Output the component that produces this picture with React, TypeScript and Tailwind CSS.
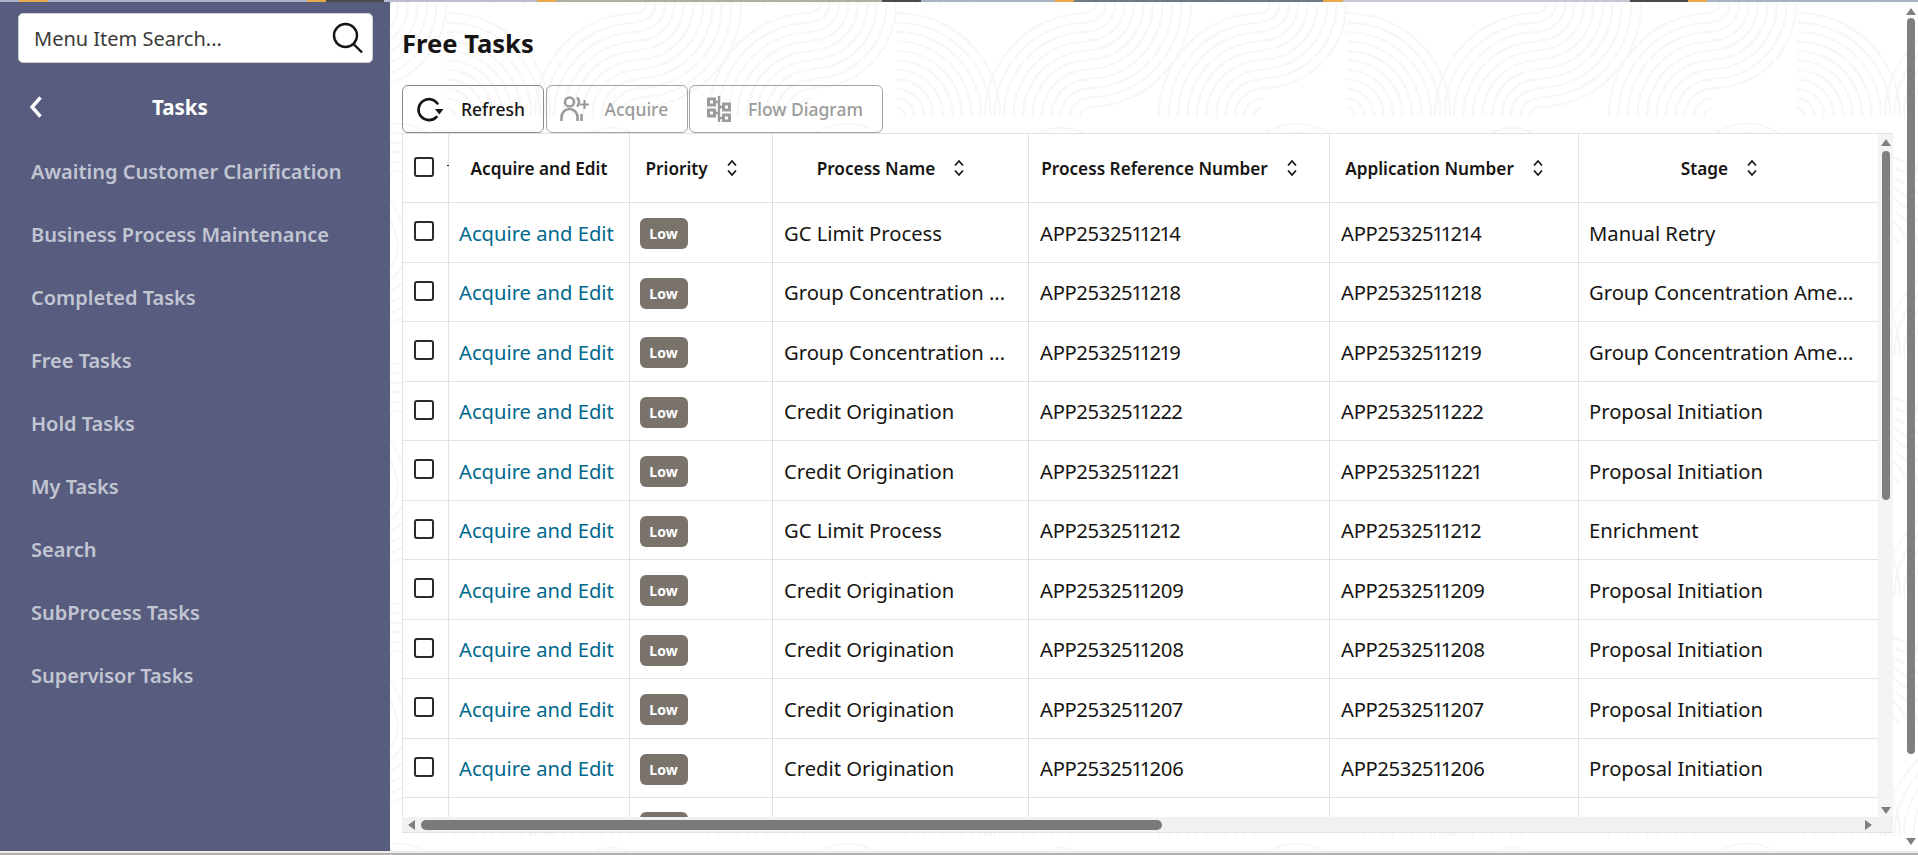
import React from 'react'

const font = "font-['Noto_Sans',sans-serif]"

const menuItems = [
  'Awaiting Customer Clarification',
  'Business Process Maintenance',
  'Completed Tasks',
  'Free Tasks',
  'Hold Tasks',
  'My Tasks',
  'Search',
  'SubProcess Tasks',
  'Supervisor Tasks',
]

const rows = [
  ['GC Limit Process', 'APP2532511214', 'Manual Retry'],
  ['Group Concentration ...', 'APP2532511218', 'Group Concentration Ame...'],
  ['Group Concentration ...', 'APP2532511219', 'Group Concentration Ame...'],
  ['Credit Origination', 'APP2532511222', 'Proposal Initiation'],
  ['Credit Origination', 'APP2532511221', 'Proposal Initiation'],
  ['GC Limit Process', 'APP2532511212', 'Enrichment'],
  ['Credit Origination', 'APP2532511209', 'Proposal Initiation'],
  ['Credit Origination', 'APP2532511208', 'Proposal Initiation'],
  ['Credit Origination', 'APP2532511207', 'Proposal Initiation'],
  ['Credit Origination', 'APP2532511206', 'Proposal Initiation'],
]

const gridCols = 'grid grid-cols-[46px_181px_142.5px_256px_301px_249px_301px]'

// Concentric quarter arcs, the faint pattern behind the page
function arcs(cx: number, cy: number, dx: number, dy: number, max: number) {
  const out: string[] = []
  for (let r = 8; r <= max; r += 9.5) {
    out.push(`M${cx + dx * r} ${cy}A${r} ${r} 0 0 ${dx * dy > 0 ? 1 : 0} ${cx} ${cy + dy * r}`)
  }
  return out.join('')
}

const tilePath = [
  arcs(0, 112, 1, -1, 106),
  arcs(191, 112, -1, -1, 108),
  arcs(365, 112, -1, -1, 108),
  arcs(191, 0, 1, 1, 108),
  arcs(365, 0, 1, 1, 85),
  arcs(165, 170, -1, -1, 55),
  arcs(165, 170, 1, -1, 55),
  arcs(400, 175, -1, -1, 60),
  arcs(400, 175, 1, -1, 60),
  arcs(60, 260, 1, -1, 120),
  arcs(60, 260, -1, -1, 120),
  arcs(300, 260, 1, -1, 120),
  arcs(300, 260, -1, -1, 120),
].join('')

function Pattern() {
  return (
    <svg className="absolute inset-0 h-full w-full" aria-hidden="true">
      <defs>
        <pattern id="waves" width="450" height="240" patternUnits="userSpaceOnUse" patternTransform="translate(57 2)">
          <path d={tilePath} fill="none" stroke="#f6f6f6" strokeWidth="2" strokeDasharray="60 2" />
        </pattern>
      </defs>
      <rect width="100%" height="100%" fill="url(#waves)" />
    </svg>
  )
}

function Checkbox() {
  return <span className="mb-[2px] block h-[20px] w-[20px] rounded-[3px] border-2 border-[#2b2b2b] bg-white" />
}

function SortIcon() {
  return (
    <svg width="12" height="18" viewBox="0 0 12 18" fill="none" stroke="#161513" strokeWidth="1.7">
      <path d="M2 6.5 6 2l4 4.5M2 11.5 6 16l4-4.5" />
    </svg>
  )
}

function HeaderCell({ label, className }: { label: string; className?: string }) {
  return (
    <div className={`flex items-center border-l-[1.5px] border-[#e2e2e2] ${className ?? 'justify-center pr-[18px]'}`}>
      <span className="pt-[1px] text-[17.2px] font-semibold text-[#161513]">{label}</span>
      <span className="ml-[18px]">
        <SortIcon />
      </span>
    </div>
  )
}

function RefreshIcon() {
  return (
    <svg width="30" height="30" viewBox="0 0 30 30" fill="none" stroke="#161513">
      <path d="M22.500 9.500A10.500 10.500 0 1 0 21.500 23" strokeWidth="2.600" strokeLinecap="round" />
      <path d="M20 15h8.500l-4.250 5.500z" fill="#161513" stroke="none" />
    </svg>
  )
}

function AcquireIcon() {
  return (
    <svg width="30" height="26" viewBox="0 0 30 26" fill="none" stroke="#9b9b9b" strokeWidth="2.6">
      <circle cx="9.500" cy="6" r="4.500" />
      <path d="M1.500 25v-4a8 8 0 0 1 16 0v4" />
      <path d="M17 1.500a6 6 0 0 1 0 9M21.500 18v7" />
      <path d="M24.500 4v9M20 8.500h9" strokeWidth="2.200" />
    </svg>
  )
}

function FlowIcon() {
  return (
    <svg width="24" height="26" viewBox="0 0 24 26" fill="none" stroke="#9b9b9b" strokeWidth="3">
      <rect x="1.500" y="3" width="6" height="6" />
      <rect x="1.500" y="14" width="6" height="6" />
      <rect x="16.500" y="8" width="6" height="6" />
      <rect x="16.500" y="19" width="6" height="6" />
      <path d="M12 0v26M8 6h4M8 17h4M12 11h4M12 22h4" strokeWidth="2.400" />
    </svg>
  )
}

export default function App() {
  return (
    <div className={`${font} flex h-[855px] flex-col overflow-hidden bg-[#ececec]`}>
      <div className="h-[2px] shrink-0 bg-[linear-gradient(90deg,#aab2c8_0,#aab2c8_1%,#e8a94a_1%,#e8a94a_2.5%,#aab2c8_2.5%,#aab2c8_16%,#e8a94a_16%,#e8a94a_17%,#4a4a48_17%,#4a4a48_20%,#b9bfd0_20%,#b9bfd0_28%,#e8a94a_28%,#e8a94a_29%,#b3aca5_29%,#b3aca5_46%,#4a4a48_46%,#4a4a48_48%,#aab2c8_48%,#aab2c8_55%,#e8a94a_55%,#e8a94a_56%,#6e7a82_56%,#6e7a82_69%,#e8a94a_69%,#e8a94a_70%,#c6c8d4_70%,#c6c8d4_85%,#4a4a48_85%,#4a4a48_88%,#e8a94a_88%,#e8a94a_89%,#aab2c8_89%)]" />
      <div className="flex h-[849px] shrink-0">
        <aside className="flex w-[390px] shrink-0 flex-col bg-[#585d7f] pl-[18px] pr-[17px] pt-[11px]">
          <div className="flex h-[50px] items-center justify-between rounded-[5px] border border-[#d0d0d0] bg-white pl-[15px] pr-[8px]">
            <span className="pt-[1px] text-[20px] text-[#3a3a38]">Menu Item Search...</span>
            <svg width="34" height="34" viewBox="0 0 34 34" fill="none" stroke="#161513" strokeWidth="2.4">
              <circle cx="15.500" cy="14.500" r="11.500" />
              <path d="M23.500 23 32 31.500" />
            </svg>
          </div>
          <div className="relative mt-[23px] flex h-[42px] items-center justify-center pr-[31px]">
            <svg className="absolute left-[10px]" width="16" height="24" viewBox="0 0 16 24" fill="none" stroke="#fff" strokeWidth="3.400">
              <path d="M12.500 2.500 4 12l8.500 9.500" />
            </svg>
            <span className="text-[20.5px] font-bold text-white">Tasks</span>
          </div>
          <nav className="ml-[13px] mt-[12px] flex flex-col">
            {menuItems.map((item) => (
              <div key={item} className="flex h-[63px] items-center whitespace-nowrap text-[20px] font-semibold text-[#c2c5d2]">
                {item}
              </div>
            ))}
          </nav>
        </aside>

        <main className="relative flex-1 overflow-hidden rounded-l-[5px] bg-white pl-[12px]">
          <Pattern />
          <div className="relative flex h-full flex-col">
            <h1 className="mt-[26px] h-[57px] text-[25.6px] font-bold leading-[32px] text-[#161513]">Free Tasks</h1>
            <div className="flex h-[48px] gap-[1.5px]">
              <button className="flex w-[142px] items-center rounded-[6px] border-[1.5px] border-[#8a8a8a] pl-[12px] text-[17.5px] font-medium text-[#161513]">
                <RefreshIcon />
                <span className="ml-[16px]">Refresh</span>
              </button>
              <button className="flex w-[142px] items-center rounded-[6px] border-[1.5px] border-[#a3a3a3] pl-[13px] text-[17.5px] font-medium text-[#9b9b9b]">
                <AcquireIcon />
                <span className="ml-[15px]">Acquire</span>
              </button>
              <button className="flex w-[194px] items-center rounded-[6px] border-[1.5px] border-[#a3a3a3] pl-[17px] text-[17.5px] font-medium text-[#9b9b9b]">
                <FlowIcon />
                <span className="ml-[17px]">Flow Diagram</span>
              </button>
            </div>

            <div className="relative h-[700px] w-[1491px] overflow-hidden border-t-[1.5px] border-[#e2e2e2] bg-white">
              <div className={`${gridCols} h-[69px] border-b-[1.5px] border-[#e2e2e2]`}>
                <div className="relative flex items-center border-l-[1.5px] border-[#e2e2e2] pl-[10.5px]">
                  <Checkbox />
                  <span className="absolute left-[44px] top-[31px] h-[1px] w-[2px] bg-[#161513]" />
                </div>
                <div className="flex items-center justify-center border-l-[1.5px] border-[#e2e2e2]">
                  <span className="pt-[1px] text-[17.2px] font-semibold text-[#161513]">Acquire and Edit</span>
                </div>
                <HeaderCell label="Priority" className="pl-[15.5px]" />
                <HeaderCell label="Process Name" />
                <HeaderCell label="Process Reference Number" />
                <HeaderCell label="Application Number" />
                <HeaderCell label="Stage" />
              </div>
              {rows.map((row, i) => (
                <div
                  key={i}
                  className={`${gridCols} h-[59.500px] border-b-[1.5px] border-[#e2e2e2] text-[20.2px] text-[#161513]`}
                >
                  <div className="flex items-center border-l-[1.5px] border-[#e2e2e2] pl-[10.5px]">
                    <Checkbox />
                  </div>
                  <div className="flex items-center border-l-[1.5px] border-[#e2e2e2] pl-[10px] pt-[1px] text-[#00688c]">
                    Acquire and Edit
                  </div>
                  <div className="flex items-center border-l-[1.5px] border-[#e2e2e2] pl-[9.5px] pt-[3px]">
                    <span className="flex h-[31px] w-[48px] items-center justify-center rounded-[6px] bg-[#7a736c] text-[14px] font-bold text-white">
                      Low
                    </span>
                  </div>
                  <div className="flex items-center border-l-[1.5px] border-[#e2e2e2] pl-[11.5px] pt-[1px]">{row[0]}</div>
                  <div className="flex items-center border-l-[1.5px] border-[#e2e2e2] pl-[11.5px] pt-[1px] tracking-[-0.25px] proportional-nums">{row[1]}</div>
                  <div className="flex items-center border-l-[1.5px] border-[#e2e2e2] pl-[11.5px] pt-[1px] tracking-[-0.25px] proportional-nums">{row[1]}</div>
                  <div className="flex items-center whitespace-nowrap border-l-[1.5px] border-[#e2e2e2] pl-[10.5px] pt-[1px]">{row[2]}</div>
                </div>
              ))}
              <div className={`${gridCols} h-[40px]`}>
                <div className="border-l-[1.5px] border-[#e2e2e2] pl-[10.5px] pt-[19px]">
                  <span className="block h-[20px] w-[20px] rounded-[3px] border-2 border-[#9a9a9a]" />
                </div>
                <div className="border-l-[1.5px] border-[#e2e2e2]" />
                <div className="border-l-[1.5px] border-[#e2e2e2] pl-[9.5px] pt-[14px]">
                  <span className="block h-[31px] w-[48px] rounded-[6px] bg-[#7a736c]" />
                </div>
                <div className="border-l-[1.5px] border-[#e2e2e2]" />
                <div className="border-l-[1.5px] border-[#e2e2e2]" />
                <div className="border-l-[1.5px] border-[#e2e2e2]" />
                <div className="border-l-[1.5px] border-[#e2e2e2]" />
              </div>

              {/* inner vertical scrollbar */}
              <div className="absolute right-0 top-0 flex h-full w-[15px] flex-col items-center border-l border-[#f1f1f1] bg-[#f4f4f4]">
                <span className="mt-[5px] h-0 w-0 border-x-[5px] border-b-[7px] border-x-transparent border-b-[#7f7f7f]" />
                <span className="mt-[5px] h-[349px] w-[8px] rounded-full bg-[#7f7f7f]" />
                <span className="mt-auto mb-[19px] h-0 w-0 border-x-[5px] border-t-[7px] border-x-transparent border-t-[#7f7f7f]" />
              </div>
              {/* inner horizontal scrollbar */}
              <div className="absolute bottom-0 left-0 right-0 flex h-[16px] items-center border-b border-[#e2e2e2] bg-[#f1f1f1]">
                <span className="ml-[6px] h-0 w-0 border-y-[5px] border-r-[7px] border-y-transparent border-r-[#7f7f7f]" />
                <span className="ml-[6px] h-[10px] w-[741px] rounded-full bg-[#7a7a7a]" />
                <span className="ml-auto mr-[21px] h-0 w-0 border-y-[5px] border-l-[7px] border-y-transparent border-l-[#7f7f7f]" />
              </div>
            </div>
          </div>

          {/* page scrollbar */}
          <div className="absolute bottom-0 right-0 top-0 flex w-[14px] flex-col items-center">
            <span className="mt-[6px] h-0 w-0 border-x-[5px] border-b-[7px] border-x-transparent border-b-[#7f7f7f]" />
            <span className="mt-[3px] h-[736px] w-[8px] rounded-full bg-[#7f7f7f]" />
            <span className="mt-auto mb-[6px] h-0 w-0 border-x-[5px] border-t-[7px] border-x-transparent border-t-[#7f7f7f]" />
          </div>
        </main>
      </div>
      <div className="mt-auto h-[2px] shrink-0 bg-[#b5b0ad]" />
    </div>
  )
}
